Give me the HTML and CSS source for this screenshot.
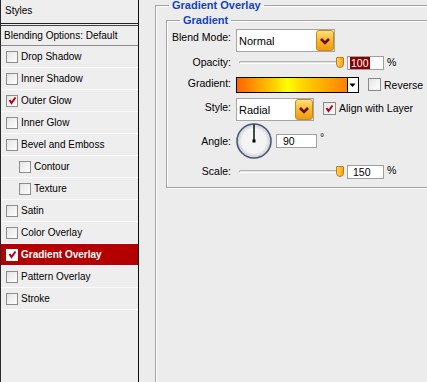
FILE: index.html
```html
<!DOCTYPE html>
<html lang="en">
<head>
<title>Layer Style</title>
<meta charset="utf-8">
<link rel="stylesheet" href="styles.css">
</head>
<body>

<div class="window">
  <div class="styles">
    <div class="styles-title">Styles</div>
    <div class="styles-blend">Blending Options: Default</div>
    <ul class="fx-list">
      <li class="fx"><span class="box"></span>Drop Shadow</li>
      <li class="fx"><span class="box"></span>Inner Shadow</li>
      <li class="fx"><span class="box"><svg width="11" height="11" viewBox="0 0 11 11"><path d="M2.5 5 L4.5 8 L8.5 2.5" class="tick"/></svg></span>Outer Glow</li>
      <li class="fx"><span class="box"></span>Inner Glow</li>
      <li class="fx"><span class="box"></span>Bevel and Emboss</li>
      <li class="fx sub"><span class="box"></span>Contour</li>
      <li class="fx sub"><span class="box"></span>Texture</li>
      <li class="fx"><span class="box"></span>Satin</li>
      <li class="fx"><span class="box"></span>Color Overlay</li>
      <li class="fx active"><span class="box"><svg width="11" height="11" viewBox="0 0 11 11"><path d="M2.5 5 L4.5 8 L8.5 2.5" class="tick"/></svg></span>Gradient Overlay</li>
      <li class="fx"><span class="box"></span>Pattern Overlay</li>
      <li class="fx"><span class="box"></span>Stroke</li>
    </ul>
  </div>

  <div class="options">
    <fieldset class="group outer">
      <legend>Gradient Overlay</legend>
      <fieldset class="group inner">
        <legend>Gradient</legend>

        <div class="row row-blend">
          <label>Blend Mode:</label>
          <div class="select blend-select">
            <span class="select-text">Normal</span>
            <span class="drop"><svg width="18" height="21" viewBox="0 0 18 21"><path d="M5 9 L9 13 L13 9" class="chev"/></svg></span>
          </div>
        </div>

        <div class="row row-opacity">
          <label>Opacity:</label>
          <div class="slider"><div class="track"></div><div class="thumb"></div></div>
          <div class="num"><span class="sel">100</span></div>
          <span class="unit">%</span>
        </div>

        <div class="row row-gradient">
          <label>Gradient:</label>
          <div class="grad-picker">
            <div class="grad-bar"></div>
            <div class="grad-drop"><svg width="9" height="14" viewBox="0 0 9 14"><path d="M1.5 5.5 L7.5 5.5 L4.5 9 Z" fill="#000"/></svg></div>
          </div>
          <span class="check reverse"><span class="box"></span>Reverse</span>
        </div>

        <div class="row row-style">
          <label>Style:</label>
          <div class="select style-select">
            <span class="select-text">Radial</span>
            <span class="drop"><svg width="18" height="21" viewBox="0 0 18 21"><path d="M5 9 L9 13 L13 9" class="chev"/></svg></span>
          </div>
          <span class="check align"><span class="box"><svg width="11" height="11" viewBox="0 0 11 11"><path d="M2.5 5 L4.5 8 L8.5 2.5" class="tick"/></svg></span>Align with Layer</span>
        </div>

        <div class="row row-angle">
          <label>Angle:</label>
          <svg class="dial" width="36" height="36" viewBox="0 0 36 36">
            <defs>
              <radialGradient id="dialFill" cx="50%" cy="50%" r="50%">
                <stop offset="70%" stop-color="#f4f4f4"/>
                <stop offset="100%" stop-color="#c8ccd6"/>
              </radialGradient>
            </defs>
            <circle cx="18" cy="18" r="17" fill="url(#dialFill)" stroke="#4b5878" stroke-width="1.6"/>
            <line x1="18" y1="18" x2="18" y2="1.5" stroke="#000" stroke-width="1.4"/>
            <rect x="16.5" y="16.5" width="3" height="3" fill="#000"/>
          </svg>
          <div class="num angle-num">90</div>
          <span class="unit deg">°</span>
        </div>

        <div class="row row-scale">
          <label>Scale:</label>
          <div class="slider"><div class="track"></div><div class="thumb"></div></div>
          <div class="num">150</div>
          <span class="unit">%</span>
        </div>
      </fieldset>
    </fieldset>
  </div>
</div>

</body>
</html>
```

FILE: styles.css
```css
* {
  box-sizing: border-box;
}

html, body {
  margin: 0;
  height: 100%;
  overflow: hidden;
}

body {
  background-color: #ececec;
  font-family: "Liberation Sans", Arial, sans-serif;
  font-size: 10.5px;
  color: #000;
}

.window {
  display: flex;
  height: 382px;
}

/* Left list of effects */
.styles {
  width: 139px;
  flex: none;
  border-left: 1px solid #2a2a2a;
  border-right: 1px solid #111;
  background-color: #eeeeee;
  font-size: 10px;
}

.styles-title {
  height: 24px;
  line-height: 22px;
  padding-left: 4px;
  border-bottom: 1px solid #222;
}

.styles-blend {
  height: 21px;
  margin-top: 1px;
  border-top: 1px solid #444;
  border-bottom: 1px solid #8a8a8a;
  line-height: 19px;
  padding-left: 3px;
}

.fx-list {
  list-style: none;
  margin: 0;
  padding: 0;
}

.fx {
  display: flex;
  align-items: center;
  height: 22px;
  padding-left: 5px;
  border-bottom: 1px solid #fbfbfb;
}

.fx.sub {
  padding-left: 18px;
}

.fx.active {
  background-color: #b30000;
  color: #fff;
  font-weight: bold;
}

.box {
  display: inline-block;
  width: 12px;
  height: 12px;
  margin-right: 3px;
  border: 1px solid #8c8c8c;
  background: linear-gradient(135deg, #e4e4e4, #ffffff);
  flex: none;
}

.box svg {
  display: block;
  margin: -0.5px 0 0 -0.5px;
}

.fx.active .box {
  border-color: #fff;
  background: #fff;
}

.tick {
  fill: none;
  stroke: #b40018;
  stroke-width: 2;
}

/* Right side */
.options {
  flex: 1;
  overflow: hidden;
}

.group {
  margin: 0;
  padding: 0;
  min-width: 0;
  border: 1px solid #a3a3a3;
  box-shadow: 1px 1px 0 #fff, inset 1px 1px 0 #fff;
}

.group > legend {
  font-weight: bold;
  font-size: 11px;
  line-height: 11px;
  color: #1242c0;
  padding: 0 3px;
}

.group.outer {
  margin-left: 16px;
  margin-right: -20px;
  height: 420px;
  padding-left: 10px;
}

.group.outer > legend {
  margin-left: 3px;
}

.group.inner {
  margin-top: 4px;
  padding-bottom: 4px;
}

.group.inner > legend {
  margin-left: 13px;
}

.row {
  display: flex;
  align-items: center;
}

.row label {
  width: 64px;
  flex: none;
  text-align: right;
  margin-right: 5px;
}

.row-blend {
  margin-top: 3px;
  height: 24px;
  align-items: flex-start;
}

.row-blend label {
  line-height: 17px;
}

.row-opacity {
  height: 20px;
}

.row-opacity label {
  margin-bottom: 2px;
}

.row-gradient {
  height: 24px;
}

.row-gradient label {
  margin-bottom: 4px;
}

.row-style {
  height: 25px;
}

.row-style label {
  margin-bottom: 5px;
}

.row-angle {
  height: 38px;
}

.row-scale {
  height: 23px;
}

.row-scale label {
  margin-bottom: 2px;
}

/* dropdowns */
.select {
  display: flex;
  align-items: center;
  height: 23px;
  background-color: #fff;
  border: 1px solid #a5a5a5;
  padding-left: 2px;
}

.blend-select {
  width: 99px;
}

.style-select {
  width: 78px;
}

.select-text {
  flex: 1;
  font-size: 11px;
}

.drop {
  width: 18px;
  height: 21px;
  border: 1px solid #c98a1c;
  border-radius: 3px;
  background: linear-gradient(#ffe07a, #f7b52a 55%, #ee9c10);
}

.drop svg {
  display: block;
  margin: -1px;
}

.chev {
  fill: none;
  stroke: #6e0a00;
  stroke-width: 2.6;
}

/* sliders */
.slider {
  position: relative;
  width: 109px;
  height: 14px;
}

.track {
  margin: 5px 0 0 3px;
  width: 101px;
  height: 3px;
  border: 1px solid #b4b4b4;
  border-bottom-color: #fff;
  border-radius: 2px;
  background-color: #e2e2e2;
}

.thumb {
  position: absolute;
  left: 100px;
  top: 1px;
  width: 8px;
  height: 11px;
  border: 1px solid #c07a10;
  border-radius: 1px 1px 4px 4px;
  background: linear-gradient(90deg, #ffd060, #f2a418);
}

.num {
  width: 37px;
  height: 14px;
  margin-left: 2px;
  border: 1px solid #a0a0a0;
  background-color: #fff;
  font-size: 10.5px;
  line-height: 12px;
  padding-left: 5px;
}

.sel {
  display: inline-block;
  background-color: #8a0000;
  color: #fff;
  padding: 0 1px;
  margin-left: -3px;
}

.unit {
  margin-left: 3px;
  margin-bottom: 3px;
}

/* gradient picker */
.grad-picker {
  display: flex;
  width: 123px;
  height: 16px;
  border: 1px solid #000;
}

.grad-bar {
  flex: 1;
  background: linear-gradient(90deg, #ff6400, #ffd000 34%, #ffff00 46%, #ffd400 60%, #ff8000);
  border-right: 1px solid #000;
}

.grad-drop {
  width: 10px;
  background-color: #fff;
}

.grad-drop svg {
  display: block;
}

.check {
  display: flex;
  align-items: center;
}

.check .box {
  width: 13px;
  height: 13px;
  margin-right: 3px;
  border-color: #8a8a8a;
}

.check .box svg {
  margin: 0;
}

.reverse {
  margin-left: 9px;
  margin-bottom: 1px;
}

.align {
  margin-left: 9px;
  margin-bottom: 3px;
}

.dial {
  flex: none;
  margin-left: 0;
}

.angle-num {
  width: 41px;
  margin-left: 4px;
  padding-left: 6px;
}

.deg {
  margin-bottom: 9px;
}
```
